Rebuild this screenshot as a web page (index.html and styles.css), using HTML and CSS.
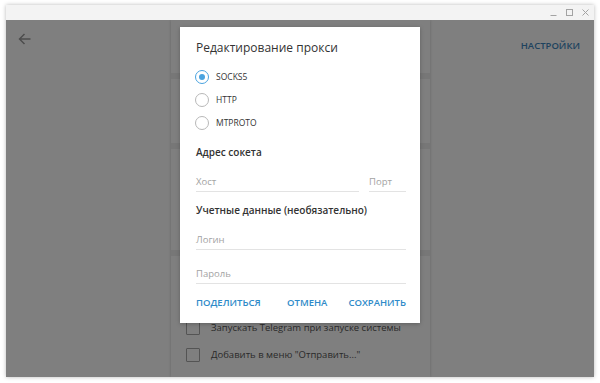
FILE: index.html
```html
<!DOCTYPE html>
<html lang="ru">
<head>
<meta charset="utf-8">
<title>Telegram — Прокси</title>
<link rel="stylesheet" href="styles.css">
</head>
<body>
<div class="window">
  <div class="titlebar">
    <svg class="ctl" width="7" height="7" viewBox="0 0 7 7"><path d="M0.5 6.5H6.5" stroke="#a3a3a3" stroke-width="1"/></svg>
    <svg class="ctl" width="7" height="7" viewBox="0 0 7 7"><rect x="0.5" y="0.5" width="6" height="6" fill="none" stroke="#a3a3a3" stroke-width="1"/></svg>
    <svg class="ctl" width="7" height="7" viewBox="0 0 7 7"><path d="M0.5 0.5L6.5 6.5M6.5 0.5L0.5 6.5" stroke="#a3a3a3" stroke-width="1"/></svg>
  </div>
  <div class="main">
    <div class="side side-left">
      <svg class="back" width="13" height="12" viewBox="0 0 13 12"><path d="M12.5 6H1.5M6.5 1L1.5 6L6.5 11" fill="none" stroke="#9a9a9a" stroke-width="1.5"/></svg>
    </div>
    <div class="column">
      <div class="section s1"></div>
      <div class="sep"></div>
      <div class="section s2"></div>
      <div class="sep"></div>
      <div class="section s3"></div>
      <div class="sep"></div>
      <div class="section s4">
        <div class="check-row"><span class="checkbox"></span><span>Запускать Telegram при запуске системы</span></div>
        <div class="check-row"><span class="checkbox"></span><span>Добавить в меню "Отправить..."</span></div>
      </div>
    </div>
    <div class="side side-right"><span class="top-link">НАСТРОЙКИ</span></div>
    <div class="overlay"></div>
    <div class="dialog">
      <div class="title">Редактирование прокси</div>
      <div class="radios">
        <div class="radio-row"><span class="radio on"></span><span class="radio-label">SOCKS5</span></div>
        <div class="radio-row"><span class="radio"></span><span class="radio-label">HTTP</span></div>
        <div class="radio-row"><span class="radio"></span><span class="radio-label">MTPROTO</span></div>
      </div>
      <div class="section-label">Адрес сокета</div>
      <div class="field-row">
        <div class="field">Хост</div>
        <div class="field port">Порт</div>
      </div>
      <div class="section-label">Учетные данные (необязательно)</div>
      <div class="field field-login">Логин</div>
      <div class="field field-pass">Пароль</div>
      <div class="actions">
        <span class="btn">ПОДЕЛИТЬСЯ</span>
        <span class="btn btn-cancel">ОТМЕНА</span>
        <span class="btn btn-save">СОХРАНИТЬ</span>
      </div>
    </div>
  </div>
</div>
</body>
</html>
```
FILE: styles.css
```css
* { box-sizing: border-box; }
html, body { margin: 0; padding: 0; background: #ffffff; }
body {
  font-family: "Open Sans", "Noto Sans", sans-serif;
  width: 600px;
  height: 383px;
  overflow: hidden;
}
.window {
  margin: 5px 6px 0;
  height: 372px;
  display: flex;
  flex-direction: column;
  box-shadow: 0 0 4px rgba(0, 0, 0, 0.28);
}
.titlebar {
  height: 15px;
  background: #f3f3f3;
  display: flex;
  justify-content: flex-end;
  align-items: center;
  gap: 9px;
  padding-right: 5px;
}
.ctl { display: block; }
.main {
  flex: 1;
  position: relative;
  display: flex;
  background: #ffffff;
  overflow: hidden;
}
.side { width: 165px; flex: 0 0 auto; }
.side-left { padding: 13px 0 0 12px; }
.back { display: block; }
.side-right {
  flex: 1;
  text-align: right;
  padding: 12px 14px 0 0;
}
.top-link {
  font-size: 9.5px;
  font-weight: 600;
  line-height: 14px;
  color: #3f86bd;
}
.column {
  width: 259px;
  flex: 0 0 auto;
  display: flex;
  flex-direction: column;
  background: #ffffff;
  box-shadow: 0 0 3px rgba(0, 0, 0, 0.22);
}
.s1 { height: 53px; }
.s2 { height: 64px; }
.s3 { height: 101px; }
.s4 { flex: 1; padding-top: 58px; }
.sep { height: 6px; background: #eeeeee; }
.check-row {
  height: 27px;
  display: flex;
  align-items: center;
  padding-left: 15px;
  font-size: 9.5px;
  color: #555555;
}
.checkbox {
  width: 14px;
  height: 14px;
  border: 1.5px solid #a8a8a8;
  border-radius: 1px;
  margin-right: 11px;
}
.overlay {
  position: absolute;
  inset: 0;
  background: rgba(0, 0, 0, 0.5);
}
.dialog {
  position: absolute;
  left: 174px;
  top: 7px;
  width: 240px;
  background: #ffffff;
  padding: 12px 14px 12px 16px;
  box-shadow: 0 1px 4px rgba(0, 0, 0, 0.25);
  color: #333333;
}
.title {
  font-size: 12px;
  line-height: 18px;
  color: #333333;
}
.radios { margin-top: 8px; }
.radio-row {
  height: 23px;
  display: flex;
  align-items: center;
}
.radio {
  width: 14px;
  height: 14px;
  margin-left: -1px;
  border: 1.5px solid #b8b8b8;
  border-radius: 50%;
  display: grid;
  place-items: center;
}
.radio.on { border-color: #4aa3df; }
.radio.on::after {
  content: "";
  width: 6px;
  height: 6px;
  border-radius: 50%;
  background: #4aa3df;
}
.radio-label {
  margin-left: 7px;
  font-size: 8.5px;
  color: #333333;
}
.section-label {
  margin-top: 10px;
  font-size: 10px;
  font-weight: 600;
  line-height: 16px;
  color: #333333;
}
.field-row {
  display: flex;
  gap: 10px;
  margin-top: 8px;
}
.field {
  flex: 1;
  padding: 6px 0 2px;
  line-height: 15px;
  font-size: 9.5px;
  color: #a3a3a3;
  border-bottom: 1px solid #e3e3e3;
}
.field.port { flex: 0 0 37px; }
.field-login { margin-top: 8px; }
.field-pass { margin-top: 10px; }
.actions {
  margin-top: 11px;
  display: flex;
  line-height: 16px;
  font-size: 9.5px;
  font-weight: 600;
  color: #2f8bc9;
}
.btn-cancel { margin-left: auto; }
.btn-save { margin-left: 21px; }
```
